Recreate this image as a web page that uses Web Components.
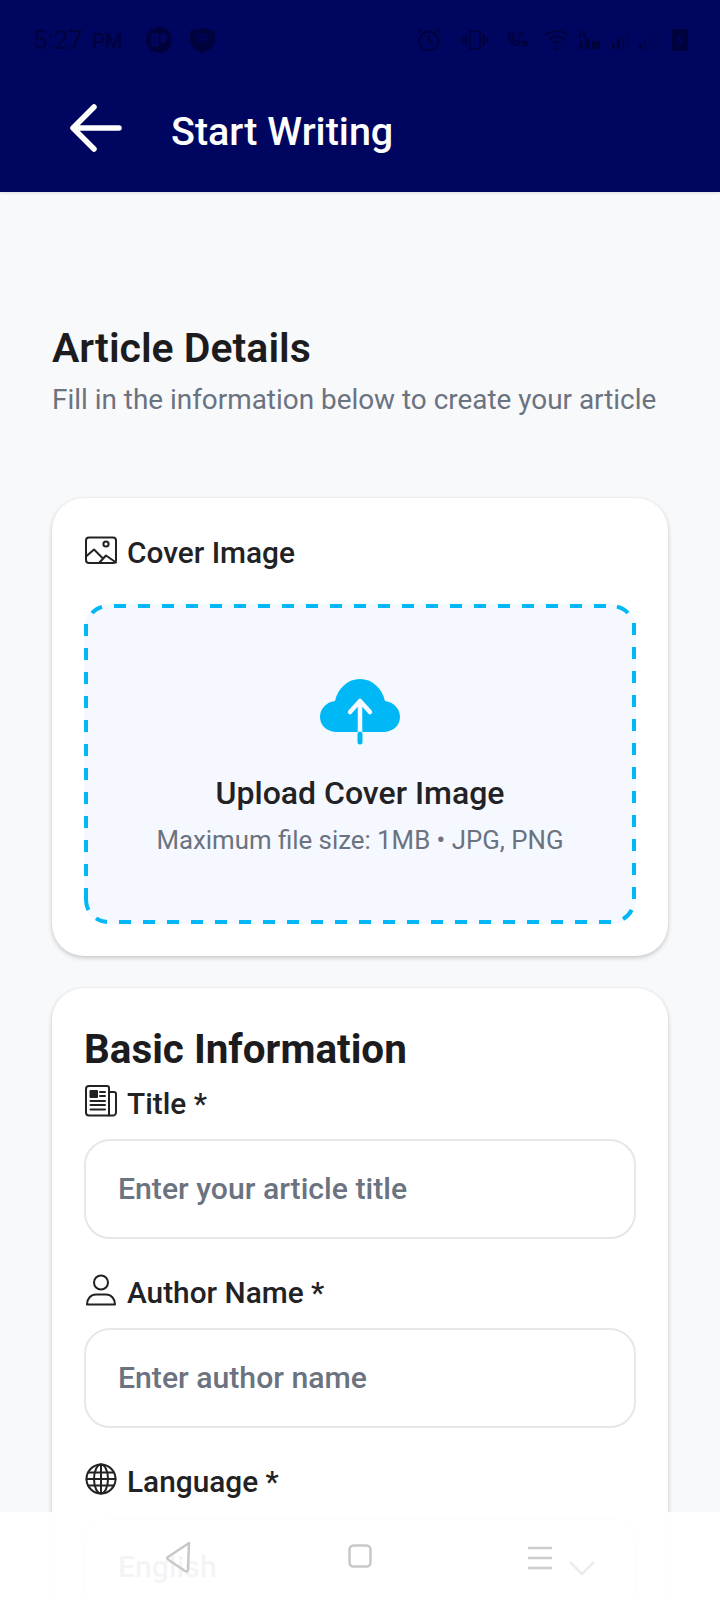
<!DOCTYPE html>
<html><head><meta charset="utf-8"><style>
html,body{margin:0;padding:0;width:720px;height:1600px;overflow:hidden;background:#f8f9fb;font-family:Roboto,sans-serif}
</style></head><body>
<template id="t-icon"><style>:host{display:inline-flex;width:32px;height:32px;flex:none}svg{width:100%;height:100%;fill:none;stroke:currentColor;stroke-width:2;stroke-linecap:round;stroke-linejoin:round;overflow:visible}</style><svg viewBox="0 0 32 32" id="s"></svg></template>
<app-screen></app-screen>
<script>
const ICONS={
image:'<g transform="translate(0,2.500)"><rect x="1" y="1" width="30" height="25.500" rx="3"/><circle cx="21" cy="7.500" r="2.600"/><path d="M1 20l8-7 9 9M14 26.500l7-7.500 10 7"/></g>',
news:'<path d="M1 4a3 3 0 0 1 3-3h18a2 2 0 0 1 2 2v27.500H4a3 3 0 0 1-3-3z"/><path d="M24 7h5a2 2 0 0 1 2 2v18.500a3 3 0 0 1-3 3h-4"/><rect x="5.500" y="6" width="6.500" height="6" fill="currentColor"/><path d="M15 7h5M15 11h5M5.500 16h14.500M5.500 20h14.500M5.500 24.500h14.500"/>',
user:'<circle cx="16" cy="8.500" r="7"/><path d="M2 30.500c0-6 4-10 9-10h10c5 0 9 4 9 10z"/>',
globe:'<circle cx="16" cy="16" r="14.500"/><ellipse cx="16" cy="16" rx="7" ry="14.500"/><path d="M16 1.500v29M3 9.500h26M1.500 16h29M3 22.500h26"/>'
};
class UiIcon extends HTMLElement{constructor(){super();const r=this.attachShadow({mode:'open'});r.append(document.getElementById('t-icon').content.cloneNode(true));r.getElementById('s').innerHTML=ICONS[this.getAttribute('name')]||''}}
customElements.define('ui-icon',UiIcon);

class StatusBar extends HTMLElement{constructor(){super();this.attachShadow({mode:'open'}).innerHTML=`<style>
:host{display:flex;align-items:center;height:80px;padding-left:33px;color:#00023d;box-sizing:border-box;position:relative}
.t{font-size:26px}.p{font-size:20px;margin-left:9px;font-weight:500;position:relative;top:1px}
svg{display:block;flex:none}
.left{display:flex;align-items:center}
.right{display:flex;align-items:center;margin-left:auto;margin-right:32px}
</style>
<div class="left"><span class="t">5:27</span><span class="p">PM</span>
<svg style="margin-left:24px" width="26" height="26" viewBox="0 0 26 26"><circle cx="13" cy="13" r="13" fill="currentColor"/><path d="M5.500 6.500h7v13h-7z M14.500 6.500h2a4.500 4.500 0 0 1 0 9h-2z" fill="#000660"/></svg>
<svg style="margin-left:18px" width="25" height="25" viewBox="0 0 25 25"><path d="M0 3 L12.500 0 L25 3 V12 C25 19 18 23 12.500 25 C7 23 0 19 0 12Z" fill="currentColor"/><text x="12.500" y="13" font-size="9" font-weight="700" text-anchor="middle" fill="#000660" font-family="Roboto">SD</text></svg></div>
<div class="right">
<svg width="24" height="24" viewBox="0 0 25 25" fill="none" stroke="currentColor" stroke-width="2.200"><circle cx="12.500" cy="13.500" r="10"/><path d="M12.500 7.500v6.500l4 2.500M1 4.500L5 1M24 4.500L20 1"/></svg>
<svg style="margin-left:20px" width="28" height="20" viewBox="0 0 29 22" fill="none" stroke="currentColor" stroke-width="2.200"><rect x="9" y="1" width="11" height="20" rx="2"/><path d="M5 5v12M1.500 8v6M24 5v12M27.500 8v6" stroke-width="2.500"/></svg>
<svg style="margin-left:17px" width="24" height="16" viewBox="0 0 25 18" fill="none" stroke="currentColor" stroke-width="2.200"><path d="M2 2c0 7 4 12 11 13l1-4-4-2-2 1c-1-1-2-2-2-4l2-1-1-3z"/><path d="M13 2h6M13 6h3"/><path d="M17 10h7v6h-7z" fill="currentColor" stroke="none"/></svg>
<svg style="margin-left:14px" width="26" height="23" viewBox="0 0 27 24" fill="none" stroke="currentColor" stroke-width="1.800"><path d="M1 7c7-6.500 18-6.500 25 0M5 11c5-4.500 12-4.500 17 0M9 15c3-2.500 6-2.500 9 0"/><circle cx="13.500" cy="20" r="1.800" fill="currentColor" stroke="none"/></svg>
<svg style="margin-left:9px" width="21" height="18" viewBox="0 0 21 18" fill="currentColor"><rect x="0" y="0" width="3" height="7"/><rect x="4" y="0" width="3" height="7"/><rect x="0" y="10" width="4" height="8"/><rect x="6" y="7" width="5" height="11"/><rect x="13" y="10" width="3" height="8"/><rect x="17" y="10" width="4" height="8"/></svg>
<svg style="margin-left:12px" width="48" height="20" viewBox="0 0 48 20" fill="currentColor"><rect x="0" y="13" width="3" height="6"/><rect x="5" y="9" width="3" height="10"/><rect x="10" y="5" width="2" height="14" opacity=".5"/><rect x="15" y="1" width="2" height="18" opacity=".4"/><rect x="27" y="13" width="3" height="6"/><rect x="32" y="9" width="2" height="10" opacity=".6"/><rect x="37" y="5" width="2" height="14" opacity=".4"/><rect x="43" y="1" width="2" height="18" opacity=".3"/></svg>
<svg style="margin-left:12px" width="16" height="22" viewBox="0 0 16 22"><path d="M0 0h16v22H0z" fill="currentColor"/><path d="M9 5L5 12h3l-1 5 4-7H8z" fill="#000660"/></svg>
</div>`}}
customElements.define('status-bar',StatusBar);

class TopBar extends HTMLElement{constructor(){super();this.attachShadow({mode:'open'}).innerHTML=`<style>
:host{display:block;height:192px;background:#000660;color:#fff;box-shadow:0 1px 3px rgba(0,0,0,.12);position:relative;z-index:1}
.row{display:flex;align-items:center;height:96px;padding-left:70px}
svg{flex:none;display:block}
h1{margin:0 0 0 49px;font-size:39.500px;font-weight:500;line-height:1;position:relative;top:4px}
</style><slot></slot><div class="row">
<svg width="52" height="48" viewBox="0 0 52 48" fill="none" stroke="#fff" stroke-width="5.500" stroke-linecap="round" stroke-linejoin="round"><path d="M49 24H4M24 3L3 24l21 21"/></svg>
<h1>Start Writing</h1></div>`}}
customElements.define('top-bar',TopBar);

class FormCard extends HTMLElement{constructor(){super();this.attachShadow({mode:'open'}).innerHTML=`<style>
:host{display:block;background:#fff;border-radius:32px;box-shadow:0 2px 5px rgba(0,0,0,.2),0 0 2px rgba(0,0,0,.05);padding:var(--pad,32px);box-sizing:border-box}
</style><slot></slot>`}}
customElements.define('form-card',FormCard);

class FieldLabel extends HTMLElement{constructor(){super();const ic=this.getAttribute('icon');this.attachShadow({mode:'open'}).innerHTML=`<style>
:host{display:flex;align-items:center;gap:10px;height:32px;font-size:29.800px;font-weight:500;color:#222224;padding-left:1px}
ui-icon{position:relative;top:-2px}
</style><ui-icon name="${ic}"></ui-icon><span><slot></slot></span>`}}
customElements.define('field-label',FieldLabel);

class TextField extends HTMLElement{constructor(){super();this.attachShadow({mode:'open'}).innerHTML=`<style>
:host{display:flex;align-items:center;height:100px;box-sizing:border-box;border:2px solid #e5e7eb;border-radius:26px;padding:0 0 2px 32px;font-size:30.200px;font-weight:500;color:#6b7280;background:#fff;margin-top:20px}
</style><slot></slot>`}}
customElements.define('text-field',TextField);

class UploadBox extends HTMLElement{constructor(){super();this.attachShadow({mode:'open'}).innerHTML=`<style>
:host{display:flex;flex-direction:column;align-items:center;position:relative;height:320px;box-sizing:border-box;background:#f5f8fe;border-radius:24px;margin-top:36px;padding-top:75px}
svg.b{position:absolute;inset:0;width:100%;height:100%}
svg.c{display:block;position:relative}
.t{font-size:32px;font-weight:500;color:#222224;margin-top:30px;line-height:36px;position:relative}
.s{font-size:25.800px;color:#6b7280;margin-top:13.500px;line-height:30px;position:relative}
</style>
<svg class="b" viewBox="0 0 552 320" fill="none" stroke="#00b8f5" stroke-width="4">
<g stroke-dasharray="12 12"><path d="M30 2H522"/><path d="M550 19V295"/><path d="M527 318H35"/><path d="M2 20V272"/></g>
<path d="M533 2.600A22 22 0 0 1 544 9"/><path d="M547.700 306A22 22 0 0 1 539 315"/><path d="M23 318A22 22 0 0 1 12 314.400"/><path d="M2 284V296A22 22 0 0 0 4.500 306"/><path d="M8 9A22 22 0 0 1 18 2.800"/>
</svg>
<svg class="c" width="80" height="66" viewBox="0 0 80 66" fill="none"><path d="M17 53C7 53 0 46.500 0 38c0-8 6-15 15-16C18 9 28 0 40 0s22 9 25 22c9 1 15 8 15 16 0 8.500-7 15-17 15z" fill="#00b8f5"/><path d="M40 53V22M30 33l10-11 10 11" stroke="#f5f8fe" stroke-width="4.500" stroke-linecap="round" stroke-linejoin="round"/><path d="M40 55v8" stroke="#00b8f5" stroke-width="5" stroke-linecap="round"/></svg>
<div class="t">Upload Cover Image</div><div class="s">Maximum file size: 1MB • JPG, PNG</div>`}}
customElements.define('upload-box',UploadBox);

class NavOverlay extends HTMLElement{constructor(){super();this.attachShadow({mode:'open'}).innerHTML=`<style>
:host{position:absolute;left:0;right:0;bottom:0;height:88px;background:rgba(255,255,255,.92);z-index:5}
svg{position:absolute;display:block}
</style>
<svg style="left:165px;top:29px" width="27" height="32" viewBox="0 0 27 32" fill="none" stroke="#c8c8c8" stroke-width="2.500" stroke-linejoin="round" stroke-linecap="round"><path d="M24 2L3 16c-1 .8-1 1.500 0 2.500L20 30c2 1 3 .5 3-1.500L24 2z"/></svg>
<svg style="left:348px;top:32px" width="24" height="24" viewBox="0 0 24 24" fill="none" stroke="#c8c8c8" stroke-width="2.500"><rect x="1.500" y="1.500" width="21" height="21" rx="4"/></svg>
<svg style="left:527px;top:34px" width="26" height="24" viewBox="0 0 26 24" stroke="#cccccc" stroke-width="2.500"><path d="M1 2h24M1 12h24M1 22h24"/></svg>
<svg style="left:569px;top:49px" width="26" height="15" viewBox="0 0 26 15" fill="none" stroke="#ececec" stroke-width="2.500"><path d="M1 1l12 12L25 1"/></svg>`}}
customElements.define('nav-overlay',NavOverlay);

class AppScreen extends HTMLElement{constructor(){super();this.attachShadow({mode:'open'}).innerHTML=`<style>
:host{display:block;position:relative;width:720px;height:1600px;overflow:hidden;background:#f8f9fb;color:#1c1c1e;font-family:Roboto,sans-serif}
main{padding:0 52px}
h2{margin:0;font-size:41px;font-weight:600;line-height:44px;color:#1c1c1e;padding-top:134px}
p{margin:11px 0 0;font-size:27.900px;line-height:38px;color:#6b7280}
.c1{margin-top:79px;--pad:38px 32px 32px;height:458px}
.c2{margin-top:32px;height:700px;--pad:32px 32px}
h3{margin:0 0 7px;font-size:40.400px;font-weight:700;line-height:60px;color:#1c1c1e}
.gap{margin-top:37px}
</style>
<top-bar><status-bar></status-bar></top-bar>
<main>
<h2>Article Details</h2>
<p>Fill in the information below to create your article</p>
<form-card class="c1"><field-label icon="image">Cover Image</field-label><upload-box></upload-box></form-card>
<form-card class="c2"><h3>Basic Information</h3>
<field-label icon="news">Title *</field-label><text-field>Enter your article title</text-field>
<field-label class="gap" icon="user">Author Name *</field-label><text-field>Enter author name</text-field>
<field-label class="gap" icon="globe">Language *</field-label><text-field>English</text-field>
</form-card>
</main>
<nav-overlay></nav-overlay>`}}
customElements.define('app-screen',AppScreen);
</script>
</body></html>
